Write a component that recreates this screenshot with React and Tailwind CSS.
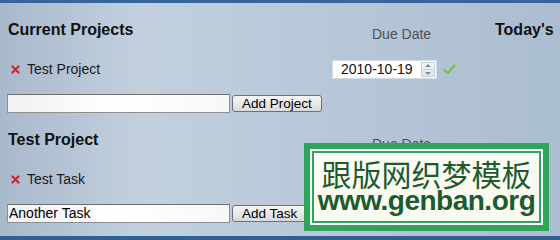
const RedX = () => (
  <svg width="9" height="9" viewBox="0 0 9 9" className="shrink-0">
    <path d="M1.5 1.5 L7.5 7.5 M7.5 1.5 L1.5 7.5" stroke="#d3202c" strokeWidth="2.2" strokeLinecap="round" />
  </svg>
);

const Spinner = () => (
  <div className="w-[14px] h-[15px] border border-[#c9d0d8] bg-gradient-to-b from-[#f3f5f8] to-[#dfe4ea] flex flex-col items-center justify-center gap-[2px]">
    <svg width="6" height="3" viewBox="0 0 6 3">
      <path d="M0 3 L3 0 L6 3 Z" fill="#7b8aa3" />
    </svg>
    <div className="w-[10px] h-px bg-[#c4cbd4]" />
    <svg width="6" height="3" viewBox="0 0 6 3">
      <path d="M0 0 L3 3 L6 0 Z" fill="#7b8aa3" />
    </svg>
  </div>
);

const Check = () => (
  <svg width="13" height="11" viewBox="0 0 13 11">
    <path d="M1.5 6 L5 9 L11.5 1.5" fill="none" stroke="#74c043" strokeWidth="2.2" strokeLinecap="round" strokeLinejoin="round" />
  </svg>
);

const TextInput = ({ value }) => (
  <div className="w-[223px] h-[19px] border border-[#8f8f8f] border-t-[#6f6f6f] bg-gradient-to-r from-[#f1f1f1] via-white to-[#f7f7f7] flex items-center px-[1px] text-[14px] text-black">
    {value}
  </div>
);

const Button = ({ children }) => (
  <button className="ml-[2px] h-[17px] px-[9px] border border-[#707070] rounded-[3px] bg-gradient-to-b from-[#f6f6f6] to-[#dadada] text-[13.5px] leading-none text-black">
    {children}
  </button>
);

const Section = ({ title, item, date, inputValue, buttonLabel, showToday }) => (
  <div className="flex flex-col">
    <div className="h-[18px] flex">
      <div className="w-[364px] pl-[8px] text-[16px] font-bold leading-[18px] text-[#111]">{title}</div>
      <div className="w-[131px] pt-[5px] pl-[8px] text-[14px] leading-[16px] text-[#4d4f55]">Due Date</div>
      {showToday && <div className="text-[16px] font-bold leading-[18px] text-[#111]">Today's</div>}
    </div>
    <div className="mt-[21px] h-[19px] flex items-center">
      <div className="w-[332px] pl-[11px] flex items-center gap-[7px] text-[14px] text-[#1a1a1a]">
        <RedX />
        <span>{item}</span>
      </div>
      {date && (
        <div className="flex items-center gap-[6px]">
          <div className="w-[105px] h-[19px] bg-white border border-[#d5dbe2] flex items-center justify-between pl-[8px] pr-[1px] text-[14px] text-[#111]">
            <span>{date}</span>
            <Spinner />
          </div>
          <Check />
        </div>
      )}
    </div>
    <div className="mt-[15px] flex items-center pl-[7px]">
      <TextInput value={inputValue} />
      <Button>{buttonLabel}</Button>
    </div>
  </div>
);

export default function App() {
  return (
    <div className="w-[560px] h-[240px] relative overflow-hidden flex flex-col font-['Liberation_Sans',Arial,sans-serif]">
      <div className="h-[3px] bg-[#35659c]" />
      <div className="flex-1 bg-linear-to-r from-[#a9b9cc] via-[#c2d0de] via-25% to-[#abbdd1] flex flex-col pt-[18px]">
        <Section
          title="Current Projects"
          item="Test Project"
          date="2010-10-19"
          inputValue=""
          buttonLabel="Add Project"
          showToday
        />
        <div className="mt-[18px]">
          <Section
            title="Test Project"
            item="Test Task"
            inputValue="Another Task"
            buttonLabel="Add Task"
          />
        </div>
      </div>
      <div className="h-[4px] bg-[#2f5f93]" />

      <div className="absolute left-[304px] top-[143px] w-[245px] h-[88px] bg-[#2fa55b] p-[6px]">
        <div className="w-full h-full bg-white p-[2px]">
          <div className="w-full h-full bg-[#2fa55b] p-[2px]">
            <div className="w-full h-full bg-[#fbfbf1] flex flex-col items-center justify-center pb-[3px] text-[#1d5a30]">
              <div className="text-[30px] leading-[30px] font-['Noto_Sans_CJK_SC',sans-serif]">跟版网织梦模板</div>
              <div className="text-[28px] leading-[26px] font-bold font-['Liberation_Sans',Arial,sans-serif] tracking-[-0.5px]">www.genban.org</div>
            </div>
          </div>
        </div>
      </div>
    </div>
  );
}
